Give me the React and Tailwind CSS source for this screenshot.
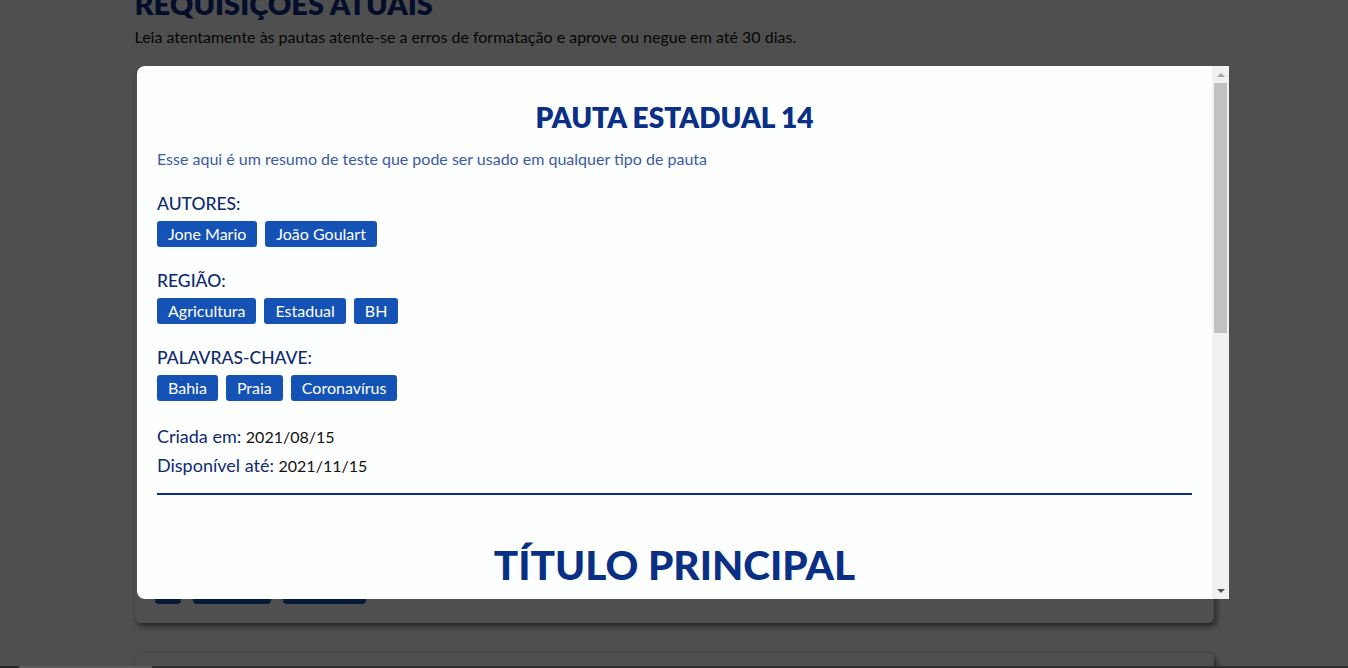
const font = { fontFamily: 'Lato, "Open Sans", sans-serif' }

function Tag({ children }) {
  return (
    <span className="inline-flex h-[26px] items-center rounded-[3px] bg-[#1552b5] px-[11px] text-[16px] text-white">
      {children}
    </span>
  )
}

function Group({ label, tags, first }) {
  return (
    <div className={first ? 'mt-[24px]' : 'mt-[23px]'}>
      <p className="text-[17.5px] leading-[22px] font-medium text-[#0f2a70]">{label}</p>
      <div className="mt-[6px] flex gap-[8px]">
        {tags.map((t) => (
          <Tag key={t}>{t}</Tag>
        ))}
      </div>
    </div>
  )
}

function Card({ children }) {
  return (
    <div className="rounded-[6px] bg-white shadow-[2px_3px_6px_rgba(0,0,0,0.6)]">{children}</div>
  )
}

export default function App() {
  return (
    <div className="relative h-[668px] overflow-hidden bg-white" style={font}>
      {/* page behind the dialog */}
      <div className="mx-auto w-[1079px] -mt-[14px]">
        <h1 className="text-[29px] leading-[36px] font-extrabold text-[#0b2f8a]">REQUISIÇÕES ATUAIS</h1>
        <p className="mt-[3px] text-[16px] text-[#111]">
          Leia atentamente às pautas atente-se a erros de formatação e aprove ou negue em até 30 dias.
        </p>
        <div className="mt-[19px]">
          <Card>
            <div className="h-[516px]" />
            <div className="flex gap-3 px-5 pb-[19px]">
              <span className="h-[20px] w-[26px] rounded-[4px] bg-[#1552b5]" />
              <span className="h-[20px] w-[78px] rounded-[4px] bg-[#1552b5]" />
              <span className="h-[20px] w-[83px] rounded-[4px] bg-[#1552b5]" />
            </div>
          </Card>
        </div>
        <div className="mt-[30px]">
          <Card>
            <div className="h-[60px]" />
          </Card>
        </div>
      </div>

      {/* overlay */}
      <div className="absolute inset-0 bg-black/[0.69]" />
      <div className="absolute bottom-0 left-0 right-0 flex h-[2px]">
        <div className="w-[19px] bg-[#262626]" />
        <div className="w-[133px] bg-[#5c5c5c]" />
        <div className="flex-1 bg-[#2e2e2e]" />
      </div>

      {/* dialog */}
      <div className="absolute left-[137px] top-[66px] flex h-[533px] w-[1092px] overflow-hidden rounded-l-[8px] bg-[#fdfefe]">
        <div className="flex-1 overflow-hidden px-[20px] pt-[34px]">
          <h2 className="text-center text-[28px] leading-[34px] font-extrabold text-[#0a3086]">PAUTA ESTADUAL 14</h2>
          <p className="mt-[15px] text-[16px] leading-[20px] text-[#3b5aa8]">
            Esse aqui é um resumo de teste que pode ser usado em qualquer tipo de pauta
          </p>
          <Group first label="AUTORES:" tags={['Jone Mario', 'João Goulart']} />
          <Group label="REGIÃO:" tags={['Agricultura', 'Estadual', 'BH']} />
          <Group label="PALAVRAS-CHAVE:" tags={['Bahia', 'Praia', 'Coronavírus']} />
          <div className="mt-[21px] text-[18px] leading-[28px] text-[#0f2a70]">
            <p>
              Criada em: <span className="text-[16px] text-[#111]">2021/08/15</span>
            </p>
            <p>
              Disponível até: <span className="text-[16px] text-[#111]">2021/11/15</span>
            </p>
          </div>
          <div className="mt-[13px] h-[2px] bg-[#0a2f86]" />
          <h2 className="mt-[46px] text-center text-[40.5px] leading-[48px] font-black text-[#0a3086]">TÍTULO PRINCIPAL</h2>
        </div>
        {/* scrollbar */}
        <div className="flex w-[17px] flex-col items-center bg-[#f1f1f1]">
          <div className="mt-[7px] h-0 w-0 border-x-[4px] border-b-[4px] border-x-transparent border-b-[#a3a3a3]" />
          <div className="mt-[6px] h-[250px] w-[13px] bg-[#c1c1c1]" />
          <div className="flex-1" />
          <div className="mb-[6px] h-0 w-0 border-x-[4px] border-t-[4px] border-x-transparent border-t-[#505050]" />
        </div>
      </div>
    </div>
  )
}
